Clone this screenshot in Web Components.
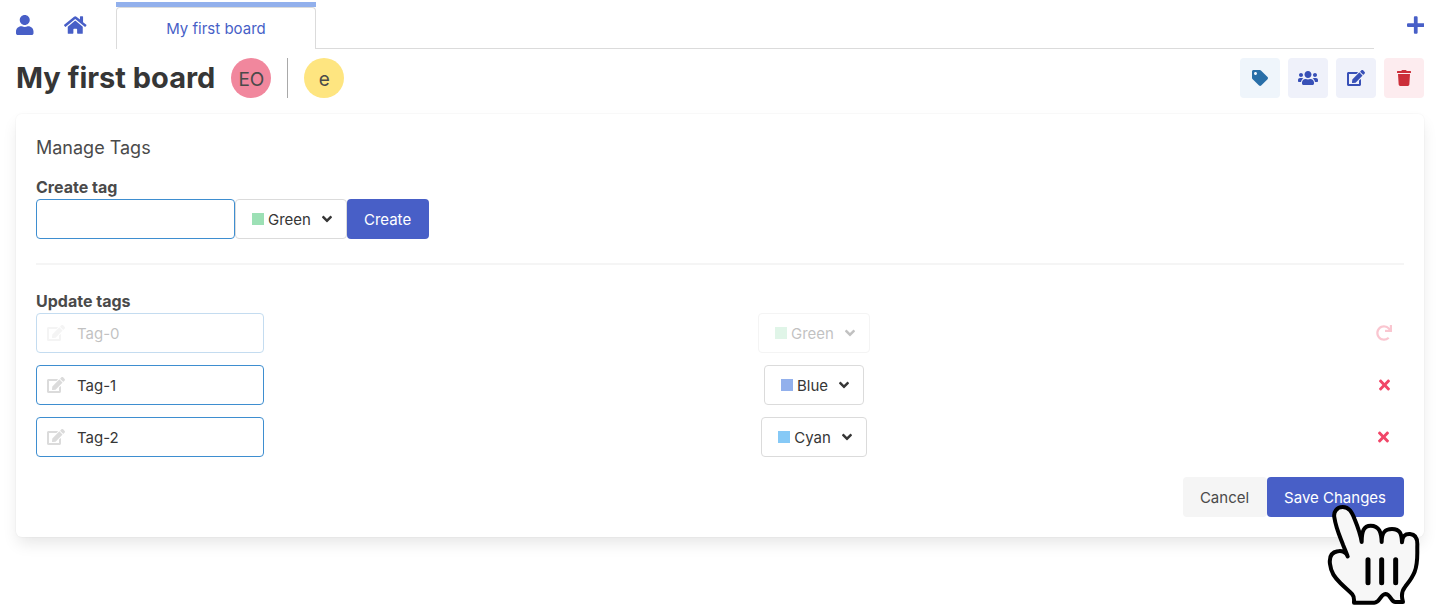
<!DOCTYPE html>
<html lang="en">
<head>
<meta charset="utf-8">
<meta name="viewport" content="width=device-width, initial-scale=1">
<title>My first board</title>
<style>
  body {
    margin: 0;
    min-height: 100vh;
    background: #fff;
    color: #4a4a4a;
    font: 15px/24px Inter, "Liberation Sans", sans-serif;
    --primary: #485fc7;
    --focus: #3e8ed0;
    --border: #dbdbdb;
    --strong: #363636;
  }
</style>
</head>
<body>
<board-app></board-app>

<script>
const define = (name, html, setup) => {
  const template = document.createElement('template');
  template.innerHTML = html;
  customElements.define(name, class extends HTMLElement {
    constructor() {
      super();
      this.attachShadow({ mode: 'open' }).append(template.content.cloneNode(true));
    }
    connectedCallback() {
      if (setup) setup(this, this.shadowRoot);
    }
  });
};

const ICONS = {
  user: [448, 'M224 256c70.7 0 128-57.3 128-128S294.7 0 224 0 96 57.3 96 128s57.3 128 128 128zm89.6 32h-16.7c-22.2 10.2-46.9 16-72.9 16s-50.6-5.8-72.9-16h-16.7C60.2 288 0 348.2 0 422.4V464c0 26.5 21.5 48 48 48h352c26.5 0 48-21.5 48-48v-41.6c0-74.2-60.2-134.4-134.4-134.4z'],
  home: [576, 'M280.37 148.26L96 300.11V464a16 16 0 0 0 16 16l112.06-.29a16 16 0 0 0 15.92-16V368a16 16 0 0 1 16-16h64a16 16 0 0 1 16 16v95.64a16 16 0 0 0 16 16.05L464 480a16 16 0 0 0 16-16V300L295.67 148.26a12.19 12.19 0 0 0-15.3 0zM571.6 251.47L488 182.56V44.05a12 12 0 0 0-12-12h-56a12 12 0 0 0-12 12v72.61L318.47 43a48 48 0 0 0-61 0L4.34 251.47a12 12 0 0 0-1.6 16.9l25.5 31A12 12 0 0 0 45.15 301l235.22-193.74a12.19 12.19 0 0 1 15.3 0L530.9 301a12 12 0 0 0 16.9-1.6l25.5-31a12 12 0 0 0-1.7-16.93z'],
  plus: [448, 'M416 208H272V64c0-17.67-14.33-32-32-32h-32c-17.67 0-32 14.33-32 32v144H32c-17.67 0-32 14.33-32 32v32c0 17.67 14.33 32 32 32h144v144c0 17.67 14.33 32 32 32h32c17.67 0 32-14.33 32-32V304h144c17.67 0 32-14.33 32-32v-32c0-17.67-14.33-32-32-32z'],
  tag: [512, 'M0 252.118V48C0 21.49 21.49 0 48 0h204.118a48 48 0 0 1 33.941 14.059l211.882 211.882c18.745 18.745 18.745 49.137 0 67.882L293.823 497.941c-18.745 18.745-49.137 18.745-67.882 0L14.059 286.059A48 48 0 0 1 0 252.118zM112 64c-26.51 0-48 21.49-48 48s21.49 48 48 48 48-21.49 48-48-21.49-48-48-48z'],
  users: [640, 'M96 224c35.3 0 64-28.7 64-64s-28.7-64-64-64-64 28.7-64 64 28.7 64 64 64zm448 0c35.3 0 64-28.7 64-64s-28.7-64-64-64-64 28.7-64 64 28.7 64 64 64zm32 32h-64c-17.6 0-33.5 7.1-45.1 18.6 40.3 22.1 68.9 62 75.1 109.4h66c17.7 0 32-14.3 32-32v-32c0-35.3-28.7-64-64-64zm-256 0c61.9 0 112-50.1 112-112S381.9 32 320 32 208 82.1 208 144s50.1 112 112 112zm76.8 32h-8.3c-20.8 10-43.9 16-68.5 16s-47.6-6-68.5-16h-8.3C179.6 288 128 339.6 128 403.2V432c0 26.5 21.5 48 48 48h288c26.5 0 48-21.5 48-48v-28.8c0-63.6-51.6-115.2-115.2-115.2zm-223.7-13.4C161.5 263.1 145.6 256 128 256H64c-35.3 0-64 28.7-64 64v32c0 17.7 14.3 32 32 32h65.9c6.3-47.4 34.9-87.3 75.2-109.4z'],
  edit: [576, 'M402.6 83.2l90.2 90.2c3.8 3.8 3.8 10 0 13.8L274.4 405.6l-92.8 10.3c-12.4 1.4-22.9-9.1-21.5-21.5l10.3-92.8L388.8 83.2c3.8-3.8 10-3.8 13.8 0zm162-22.9l-48.8-48.8c-15.2-15.2-39.9-15.2-55.2 0l-35.4 35.4c-3.8 3.8-3.8 10 0 13.8l90.2 90.2c3.8 3.8 10 3.8 13.8 0l35.4-35.4c15.2-15.3 15.2-40 0-55.2zM384 346.2V448H64V128h229.8c3.2 0 6.2-1.3 8.5-3.5l40-40c7.6-7.6 2.2-20.5-8.5-20.5H48C21.5 64 0 85.5 0 112v352c0 26.5 21.5 48 48 48h352c26.5 0 48-21.5 48-48V306.2c0-10.7-12.9-16-20.5-8.5l-40 40c-2.2 2.3-3.5 5.3-3.5 8.5z'],
  trash: [448, 'M432 32H312l-9.4-18.7A24 24 0 0 0 281.1 0H166.8a23.72 23.72 0 0 0-21.4 13.3L136 32H16A16 16 0 0 0 0 48v32a16 16 0 0 0 16 16h416a16 16 0 0 0 16-16V48a16 16 0 0 0-16-16zM53.2 467a48 48 0 0 0 47.9 45h245.8a48 48 0 0 0 47.9-45L416 128H32z'],
  angle: [320, 'M143 352.3L7 216.3c-9.4-9.4-9.4-24.6 0-33.9l22.6-22.6c9.4-9.4 24.6-9.4 33.9 0l96.4 96.4 96.4-96.4c9.4-9.4 24.6-9.4 33.9 0l22.6 22.6c9.4 9.4 9.4 24.6 0 33.9l-136 136c-9.2 9.4-24.4 9.4-33.8 0z'],
  times: [352, 'M242.72 256l100.07-100.07c12.28-12.28 12.28-32.19 0-44.48l-22.24-22.24c-12.28-12.28-32.19-12.28-44.48 0L176 189.28 75.93 89.21c-12.28-12.28-32.19-12.28-44.48 0L9.21 111.45c-12.28 12.28-12.28 32.19 0 44.48L109.28 256 9.21 356.07c-12.28 12.28-12.28 32.19 0 44.48l22.24 22.24c12.28 12.28 32.2 12.28 44.48 0L176 322.72l100.07 100.07c12.28 12.28 32.2 12.28 44.48 0l22.24-22.24c12.28-12.28 12.28-32.19 0-44.48L242.72 256z'],
  redo: [512, 'M500.33 0h-47.41a12 12 0 0 0-12 12.57l4 82.76A247.42 247.42 0 0 0 256 8C119.34 8 7.9 119.53 8 256.19 8.1 393.07 119.1 504 256 504a247.1 247.1 0 0 0 166.18-63.91 12 12 0 0 0 .48-17.43l-34-34a12 12 0 0 0-16.38-.55A176 176 0 1 1 402.1 157.8l-101.53-4.87a12 12 0 0 0-12.57 12v47.41a12 12 0 0 0 12 12h200.33a12 12 0 0 0 12-12V12a12 12 0 0 0-12-12z']
};

const COLORS = { Green: '#9ce0b5', Blue: '#92b0ec', Cyan: '#86c9f6' };

/* Single-colour glyph; --icon-size sets its height. */
define('app-icon', `
  <style>
    :host { display: inline-flex; }
    svg { display: block; height: var(--icon-size, 16px); fill: currentColor; }
  </style>
  <svg aria-hidden="true"><path/></svg>
`, (el, root) => {
  const [width, d] = ICONS[el.getAttribute('name')];
  root.querySelector('svg').setAttribute('viewBox', `0 0 ${width} 512`);
  root.querySelector('path').setAttribute('d', d);
});

/* Square button with an icon in it. */
define('icon-button', `
  <style>
    :host { display: block; }
    button {
      display: flex; align-items: center; justify-content: center;
      width: 40px; height: 40px; padding: 0; border: 0; border-radius: 4px;
      background: var(--tone-bg, transparent); color: var(--tone, #f14668);
      cursor: pointer;
    }
  </style>
  <button type="button"><slot></slot></button>
`, (el, root) => root.querySelector('button').setAttribute('aria-label', el.getAttribute('label')));

/* Text button: primary, or light with the "light" attribute. */
define('app-button', `
  <style>
    :host { display: block; }
    button {
      height: 40px; padding: 2px 18px 0 17px; border: 0; border-radius: 4px;
      background: var(--primary); color: #fff;
      font: inherit; white-space: nowrap; cursor: pointer;
    }
    :host([light]) button { background: #f5f5f5; color: #4a4a4a; }
  </style>
  <button type="button"><slot></slot></button>
`);

define('user-avatar', `
  <style>
    :host {
      display: flex; align-items: center; justify-content: center;
      width: 40px; height: 40px; padding-top: 3px; box-sizing: border-box;
      border-radius: 50%; background: var(--avatar); font-size: 19px;
    }
  </style>
  <slot></slot>
`);

define('color-select', `
  <style>
    :host { display: block; }
    .box {
      display: flex; align-items: center; gap: 4px; box-sizing: border-box;
      height: 40px; padding: 0 7px 0 16px;
      border: 1px solid var(--border); border-radius: 4px; background: #fff;
      color: var(--strong);
    }
    .swatch { width: 12px; height: 12px; }
    select {
      appearance: none; field-sizing: content;
      margin: 0; padding: 2px 0 0; border: 0; background: none;
      color: inherit; font: inherit;
    }
    .arrow { display: flex; justify-content: center; width: 24px; }
  </style>
  <div class="box">
    <span class="swatch"></span>
    <select aria-label="Colour"></select>
    <span class="arrow"><app-icon name="angle"></app-icon></span>
  </div>
`, (el, root) => {
  const select = root.querySelector('select');
  const paint = () => root.querySelector('.swatch').style.background = COLORS[select.value];
  for (const name of Object.keys(COLORS)) select.append(new Option(name));
  select.value = el.getAttribute('value');
  select.addEventListener('change', paint);
  paint();
});

/* One editable tag: name, colour, and a remove (or restore) button. */
customElements.define('tag-row', class extends HTMLElement {
  connectedCallback() {
    const removed = this.hasAttribute('removed');
    this.attachShadow({ mode: 'open' }).innerHTML = `
      <style>
        :host { display: flex; justify-content: space-between; align-items: center; }
        :host([removed]) > * { opacity: .3; }
        .faded { opacity: .3; }
        .field { position: relative; width: 228px; }
        .field app-icon {
          position: absolute; inset: 0 auto 0 0; width: 40px;
          align-items: center; justify-content: center; color: var(--border);
        }
        input {
          display: block; box-sizing: border-box; width: 100%; height: 40px;
          padding: 0 12px 0 40px; border: 1px solid var(--focus); border-radius: 4px;
          background: #fff; color: var(--strong); font: inherit; outline: 0;
        }
      </style>
      <div class="field ${removed ? 'faded' : ''}">
        <input aria-label="Tag name" value="${this.getAttribute('name')}">
        <app-icon name="edit"></app-icon>
      </div>
      <color-select class="${removed ? 'faded' : ''}" value="${this.getAttribute('color')}"></color-select>
      <icon-button class="${removed ? 'faded' : ''}" label="${removed ? 'Restore' : 'Remove'}">
        <app-icon name="${removed ? 'redo' : 'times'}"></app-icon>
      </icon-button>`;
  }
});

define('top-tabs', `
  <style>
    :host { display: flex; align-items: flex-start; padding: 2px 16px 0; }
    a { color: var(--primary); text-decoration: none; }
    .nav { display: flex; height: 46px; align-items: center; --icon-size: 20px; }
    .user { width: 48px; }
    .home { width: 52px; }
    .tabs { flex: 1; display: flex; }
    .tab { width: 200px; box-sizing: border-box; border-top: 5px solid #92b0ec; }
    .tab a {
      display: block; height: 42px; box-sizing: border-box; padding-top: 9px;
      border: 1px solid var(--border); border-bottom: 0; border-radius: 4px 4px 0 0;
      text-align: center;
    }
    .rest { flex: 1; border-bottom: 1px solid var(--border); }
    .add { width: 50px; justify-content: flex-end; }
    button { display: flex; padding: 0; border: 0; background: none; color: var(--primary); cursor: pointer; }
  </style>
  <a class="nav user" href="#account" aria-label="Account"><app-icon name="user"></app-icon></a>
  <a class="nav home" href="#home" aria-label="Home"><app-icon name="home"></app-icon></a>
  <div class="tabs">
    <div class="tab"><a href="#board">My first board</a></div>
    <div class="rest"></div>
  </div>
  <div class="nav add"><button type="button" aria-label="New board"><app-icon name="plus"></app-icon></button></div>
`);

define('board-header', `
  <style>
    :host { display: flex; align-items: center; gap: 16px; padding: 9px 16px 16px; }
    h1 { margin: 0; font-size: 29px; line-height: 40px; font-weight: 700; color: var(--strong); }
    .divider { width: 1px; height: 40px; background: #a9a9a9; }
    .tools { display: flex; gap: 8px; margin-left: auto; }
    .pink { --avatar: #f1879d; }
    .yellow { --avatar: #fee580; }
    .info { --tone: #296fa8; --tone-bg: #eff5fb; }
    .link { --tone: #3850b7; --tone-bg: #eff1fa; }
    .danger { --tone: #cc2f3a; --tone-bg: #fdecef; }
  </style>
  <h1>My first board</h1>
  <user-avatar class="pink">EO</user-avatar>
  <span class="divider"></span>
  <user-avatar class="yellow">e</user-avatar>
  <div class="tools">
    <icon-button class="info" label="Tags"><app-icon name="tag"></app-icon></icon-button>
    <icon-button class="link" label="Members"><app-icon name="users"></app-icon></icon-button>
    <icon-button class="link" label="Edit"><app-icon name="edit"></app-icon></icon-button>
    <icon-button class="danger" label="Delete"><app-icon name="trash"></app-icon></icon-button>
  </div>
`);

define('pointing-hand', `
  <style>
    :host { display: block; width: 94px; height: 102px; pointer-events: none; }
    svg { display: block; width: 100%; height: 100%; }
  </style>
  <svg viewBox="18 12 282 306" aria-hidden="true" stroke="#000" stroke-linecap="round" stroke-linejoin="round">
    <path fill="#f7f7f7" stroke-width="12" d="M68 21C50 21 40 36 43 52C48 86 60 110 69 134C75 148 79 160 83 169C79 157 66 151 53 154C36 157 27 170 30 192C33 218 44 232 61 249C77 265 88 273 97 283C104 291 102 299 102 308H163C180 308 181 283 196 282C212 282 213 306 226 306H249C244 290 246 272 255 261C266 246 276 235 284 215C295 187 291 164 292 132C292 114 286 103 270 102C255 101 246 109 246 127C245 101 240 87 216 87C194 87 185 98 185 126C184 97 178 77 152 77C131 77 125 94 125 126C121 100 113 80 104 58C96 37 88 21 68 21Z"/>
    <path fill="none" stroke-width="15" d="M144 179V248M185 179V248M227 179V248"/>
  </svg>
`);

define('manage-tags', `
  <style>
    :host {
      display: block; margin: 0 16px; padding: 20px; border-radius: 6px; background: #fff;
      box-shadow: 0 8px 16px -2px rgba(10, 10, 10, .1), 0 0 0 1px rgba(10, 10, 10, .02);
    }
    h2 { margin: 0 0 14px; font-size: 18px; line-height: 27px; font-weight: 400; }
    label, h3 { display: block; margin: 0; font-size: 16px; line-height: 24px; font-weight: 700; }
    .create { display: flex; }
    .create input {
      box-sizing: border-box; width: 199px; height: 40px; padding: 0 12px;
      border: 1px solid var(--focus); border-radius: 4px; font: inherit; outline: 0;
    }
    hr { height: 2px; margin: 24px 0; border: 0; background: #f5f5f5; }
    .list { display: flex; flex-direction: column; gap: 12px; }
    footer { position: relative; display: flex; justify-content: flex-end; margin-top: 20px; }
    pointing-hand { position: absolute; top: 27px; right: -16px; }
  </style>
  <h2>Manage Tags</h2>
  <label for="name">Create tag</label>
  <div class="create">
    <input id="name" type="text">
    <color-select value="Green"></color-select>
    <app-button>Create</app-button>
  </div>
  <hr>
  <h3>Update tags</h3>
  <div class="list">
    <tag-row name="Tag-0" color="Green" removed></tag-row>
    <tag-row name="Tag-1" color="Blue"></tag-row>
    <tag-row name="Tag-2" color="Cyan"></tag-row>
  </div>
  <footer>
    <app-button light>Cancel</app-button>
    <app-button>Save Changes</app-button>
    <pointing-hand></pointing-hand>
  </footer>
`);

define('board-app', `
  <style>:host { display: block; }</style>
  <top-tabs></top-tabs>
  <main>
    <board-header></board-header>
    <manage-tags></manage-tags>
  </main>
`);
</script>
</body>
</html>
